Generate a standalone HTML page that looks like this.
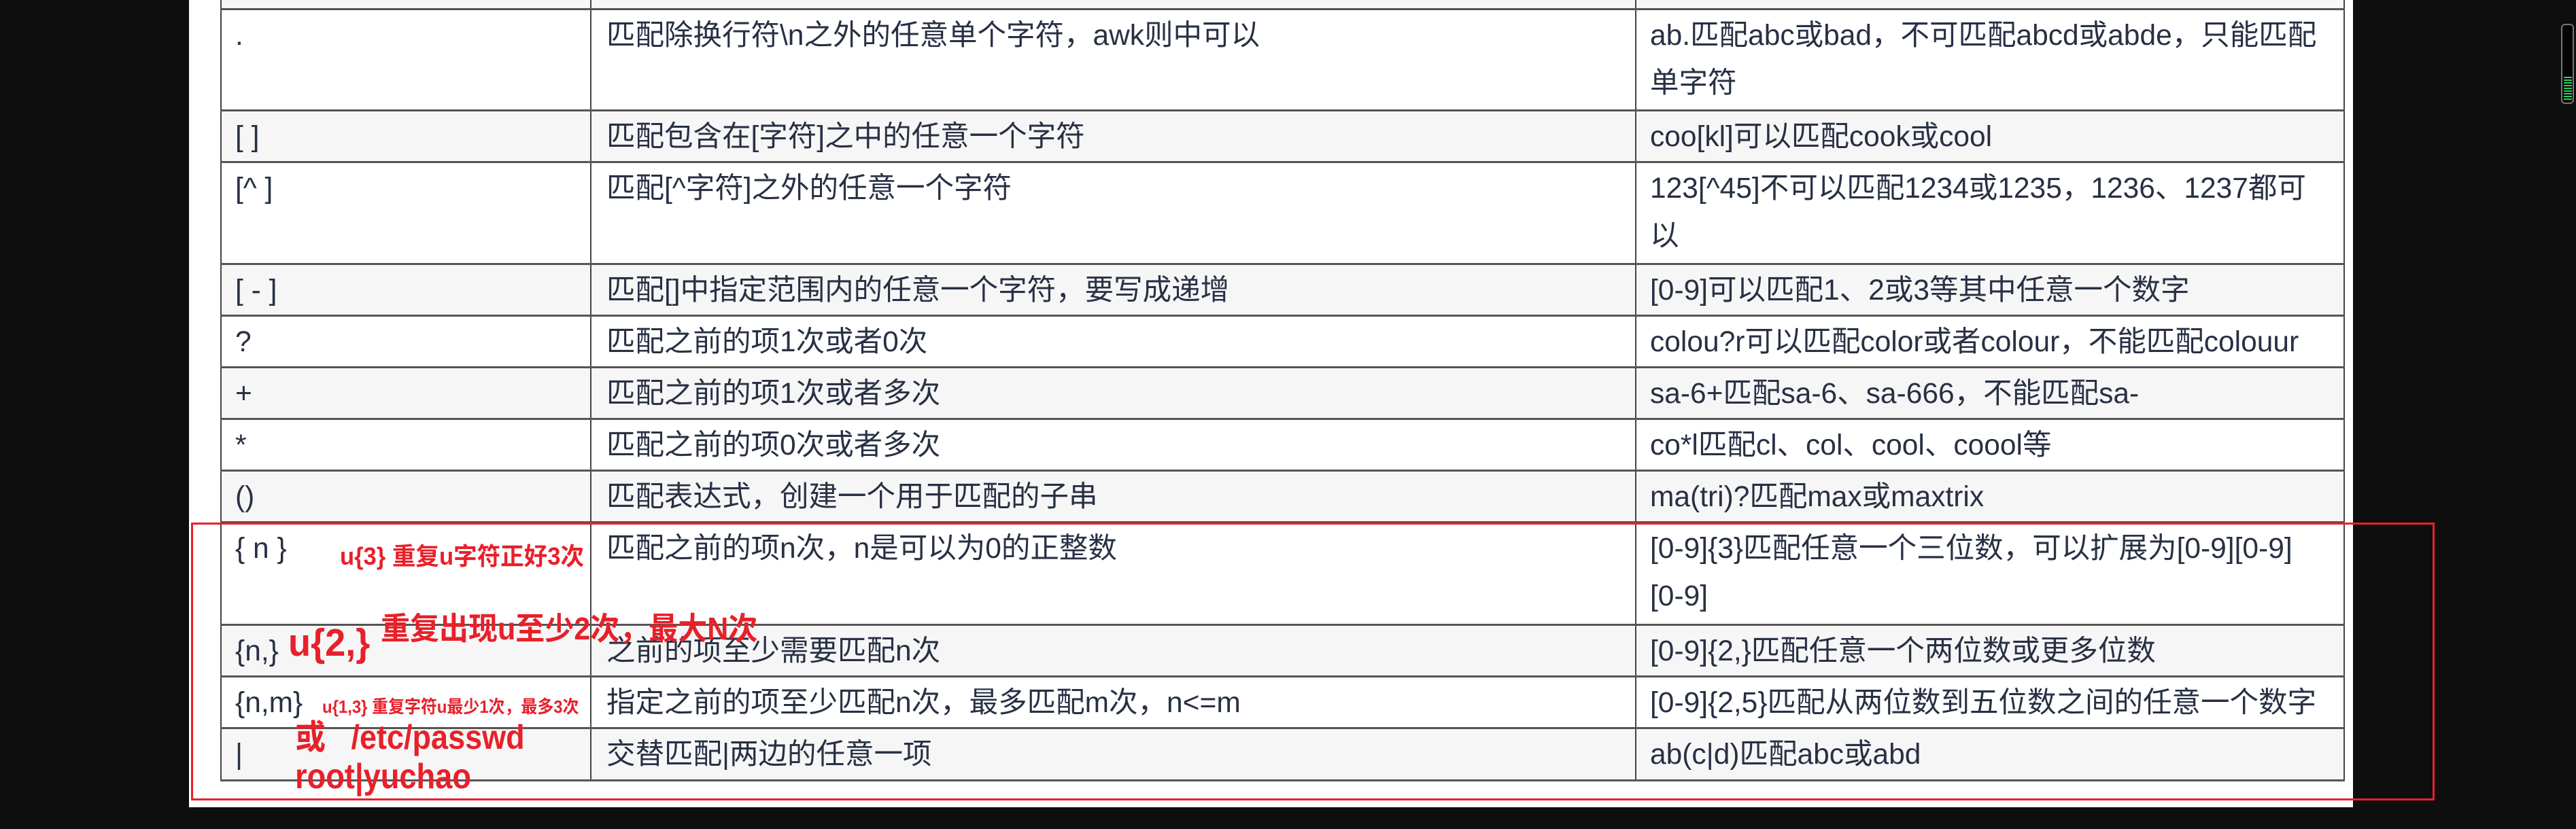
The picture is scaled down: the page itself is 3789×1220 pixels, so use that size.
<!DOCTYPE html>
<html><head><meta charset="utf-8"><style>
html,body{margin:0;padding:0;}
body{width:3789px;height:1220px;background:#0e0e0e;position:relative;overflow:hidden;font-family:"Liberation Sans","Noto Sans CJK SC",sans-serif;}
#page{position:absolute;left:278px;top:0;width:3183px;height:1188px;background:#fff;}
.row{position:absolute;left:324px;width:3125px;border-bottom:3px solid #555;box-sizing:border-box;}
.g{background:#f6f6f6;}
.c{position:absolute;top:0;bottom:0;box-sizing:border-box;padding:3px 0 0 20px;font-size:42.5px;line-height:70px;color:#283044;white-space:nowrap;}
.c1{left:0;width:546px;border-left:2px solid #444;border-right:2px solid #444;}
.c2{left:546px;width:1537px;border-right:2px solid #444;padding-left:22px;}
.c3{left:2083px;width:1042px;border-right:2px solid #444;}
.r{position:absolute;color:#e8202a;font-weight:bold;white-space:nowrap;font-family:"Liberation Sans","Noto Sans CJK SC",sans-serif;transform-origin:0 0;line-height:1.2;}
</style></head><body>
<div id="page"></div>
<div class="row g" style="top:0;height:15px;"><div class="c c1"></div><div class="c c2"></div><div class="c c3"></div></div>
<div class="row" style="top:15px;height:149px;"><div class="c c1">.</div><div class="c c2">匹配除换行符\n之外的任意单个字符，awk则中可以</div><div class="c c3">ab.匹配abc或bad，不可匹配abcd或abde，只能匹配<br>单字符</div></div>
<div class="row g" style="top:164px;height:76px;"><div class="c c1">[ ]</div><div class="c c2">匹配包含在[字符]之中的任意一个字符</div><div class="c c3">coo[kl]可以匹配cook或cool</div></div>
<div class="row" style="top:240px;height:150px;"><div class="c c1">[^ ]</div><div class="c c2">匹配[^字符]之外的任意一个字符</div><div class="c c3">123[^45]不可以匹配1234或1235，1236、1237都可<br>以</div></div>
<div class="row g" style="top:390px;height:76px;"><div class="c c1">[ - ]</div><div class="c c2">匹配[]中指定范围内的任意一个字符，要写成递增</div><div class="c c3">[0-9]可以匹配1、2或3等其中任意一个数字</div></div>
<div class="row" style="top:466px;height:76px;"><div class="c c1">?</div><div class="c c2">匹配之前的项1次或者0次</div><div class="c c3">colou?r可以匹配color或者colour，不能匹配colouur</div></div>
<div class="row g" style="top:542px;height:76px;"><div class="c c1">+</div><div class="c c2">匹配之前的项1次或者多次</div><div class="c c3">sa-6+匹配sa-6、sa-666，不能匹配sa-</div></div>
<div class="row" style="top:618px;height:76px;"><div class="c c1">*</div><div class="c c2">匹配之前的项0次或者多次</div><div class="c c3">co*l匹配cl、col、cool、coool等</div></div>
<div class="row g" style="top:694px;height:76px;"><div class="c c1">()</div><div class="c c2">匹配表达式，创建一个用于匹配的子串</div><div class="c c3">ma(tri)?匹配max或maxtrix</div></div>
<div class="row" style="top:770px;height:151px;"><div class="c c1">{ n }</div><div class="c c2">匹配之前的项n次，n是可以为0的正整数</div><div class="c c3">[0-9]{3}匹配任意一个三位数，可以扩展为[0-9][0-9]<br>[0-9]</div></div>
<div class="row g" style="top:921px;height:76px;"><div class="c c1">{n,}</div><div class="c c2">之前的项至少需要匹配n次</div><div class="c c3">[0-9]{2,}匹配任意一个两位数或更多位数</div></div>
<div class="row" style="top:997px;height:76px;"><div class="c c1">{n,m}</div><div class="c c2">指定之前的项至少匹配n次，最多匹配m次，n&lt;=m</div><div class="c c3">[0-9]{2,5}匹配从两位数到五位数之间的任意一个数字</div></div>
<div class="row g" style="top:1073px;height:77px;"><div class="c c1">|</div><div class="c c2">交替匹配|两边的任意一项</div><div class="c c3">ab(c|d)匹配abc或abd</div></div>

<div style="position:absolute;left:281px;top:769px;width:3300px;height:409px;border:3px solid #e8202a;box-sizing:border-box;"></div>

<div class="r" style="left:500px;top:797px;font-size:36px;transform:scaleX(0.96);">u{3} 重复u字符正好3次</div>
<div class="r" style="left:424px;top:912px;font-size:57px;transform:scaleX(0.95);">u{2,}</div>
<div class="r" style="left:560px;top:898px;font-size:46px;transform:scaleX(0.935);">重复出现u至少2次，最大N次</div>
<div class="r" style="left:474px;top:1025px;font-size:26px;transform:scaleX(0.92);">u{1,3} 重复字符u最少1次，最多3次</div>
<div class="r" style="left:434px;top:1055px;font-size:50px;transform:scaleX(0.9);">或&nbsp;&nbsp;&nbsp;/etc/passwd</div>
<div class="r" style="left:434px;top:1112px;font-size:52px;transform:scaleX(0.87);">root|yuchao</div>

<div style="position:absolute;left:3767px;top:35px;width:19px;height:118px;border:2px solid #777;border-radius:6px;box-sizing:border-box;background:#050505;"></div>
<div style="position:absolute;left:3771px;top:113px;width:12px;height:34px;background:repeating-linear-gradient(#2ecc5a 0 2px,#050505 2px 4px);"></div>
</body></html>
